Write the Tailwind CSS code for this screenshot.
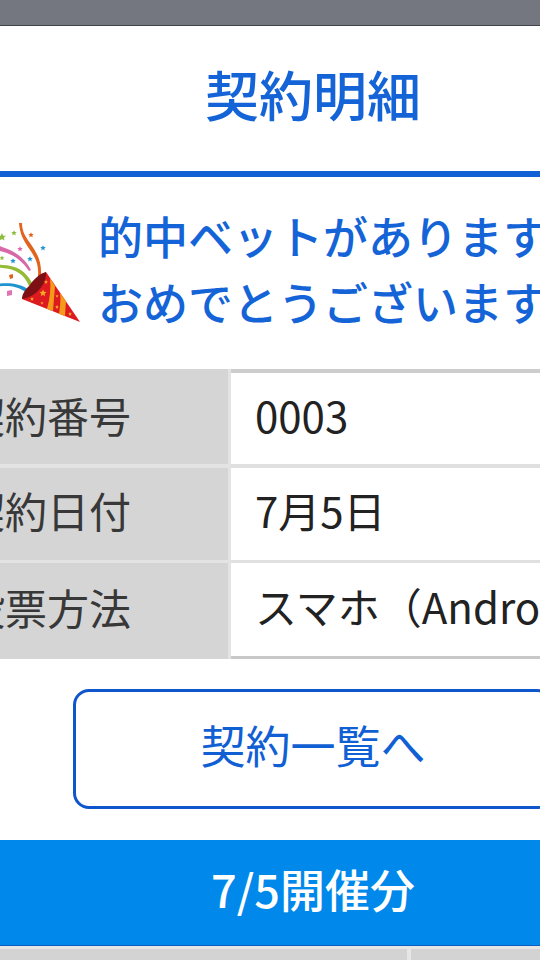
<!DOCTYPE html>
<html lang="ja">
<head>
    <meta charset="UTF-8">
    <meta name="viewport" content="width=device-width, initial-scale=1.0">
    <title>契約明細</title>

    <!-- Tailwind CSS -->
    <script src="https://cdn.jsdelivr.net/npm/@tailwindcss/browser@4"></script>
</head>
<body class="bg-white font-['Noto_Sans_CJK_JP',sans-serif] text-[#222] overflow-x-hidden">
    <!-- Page is wider than the window on both sides -->
    <div class="-ml-16 -mr-[150px]">
        <!-- Status bar -->
        <div class="h-[26px] bg-[#74777f] border-b border-[#3f444a]"></div>

        <!-- Title -->
        <header class="pt-7 pb-[37px] border-b-6 border-[#1260d6]">
            <h1 class="text-center text-[54px] leading-[80px] font-medium text-[#1464d8]">契約明細</h1>
        </header>

        <main>
            <!-- Winning message -->
            <section class="flex items-center gap-[18px] pl-6 pt-[26px] pb-[34px]">
                <svg class="w-[120px] h-[100px] shrink-0 mt-2" viewBox="-40 0 120 100" fill="none" aria-hidden="true">
                    <defs>
                        <path id="star" d="M0-4 1.2-1.3 4-1.2 1.8.7 2.5 3.5 0 1.9-2.5 3.5-1.8.7-4-1.2-1.2-1.3z"/>
                    </defs>
                    <!-- Streamers -->
                    <path d="M19 0h3c0 8 3 13 8 20 7 10 12 18 11 34l-3-1c1-14-4-20-10-29C22 15 20 10 19 0z" fill="#e0641e"/>
                    <path d="M-30 24c12-4 24-3 32 0 13 4 23 11 29 23l-2 1C21 36 12 31 0 28c-10-3-20-3-30-1z" fill="#d868a8"/>
                    <path d="M-30 44c12-3 22-3 32-2 14 0 24 6 30 18l-3 3C24 51 16 46 2 45c-10-1-20 0-32 3z" fill="#95bb36"/>
                    <path d="M-26 70C-14 60 14 56 28 66l-2 3C12 59-10 62-24 73z" fill="#1d93cf"/>
                    <!-- Cone -->
                    <path d="M46 49 80 99 22 76z" fill="#dc1a20"/>
                    <path d="M50 55l5 8-2 25-6-2c3-11 4-20 3-31zM60 70l6 8-1 15-6-2c1-7 2-14 1-21z" fill="#f59a1b"/>
                    <path d="M46 49c1 12-10 25-24 27 0-4 2-8 7-13 4-6 11-13 17-14z" fill="#7d1015"/>
                    <g fill="#f7a823">
                        <use href="#star" transform="translate(43 70) scale(.9)"/>
                        <use href="#star" transform="translate(32 76) scale(.5)"/>
                        <use href="#star" transform="translate(46 59) scale(.5)"/>
                        <use href="#star" transform="translate(57 73) scale(.4)"/>
                        <use href="#star" transform="translate(57 84) scale(.5)"/>
                        <use href="#star" transform="translate(70 91) scale(.5)"/>
                        <use href="#star" transform="translate(42 80) scale(.4)"/>
                    </g>
                    <!-- Confetti -->
                    <g fill="#8dbb3c">
                        <use href="#star" transform="translate(2 14)"/>
                        <use href="#star" transform="translate(14 10) scale(.7)"/>
                        <use href="#star" transform="translate(2 35) scale(.6)"/>
                    </g>
                    <g fill="#1d93cf">
                        <use href="#star" transform="translate(43 25) scale(.7)"/>
                        <use href="#star" transform="translate(30 36) scale(.7)"/>
                        <use href="#star" transform="translate(13 38) scale(.7)"/>
                    </g>
                    <use href="#star" transform="translate(20 26) scale(.7)" fill="#d868a8"/>
                    <use href="#star" transform="translate(31 12) scale(.7)" fill="#e0641e"/>
                    <path d="M9 52l4-1v4l-3 1z" fill="#e0641e"/>
                    <path d="M7 68l5-1v5l-5 1z" fill="#dd74b4"/>
                </svg>
                <p class="text-[45px] leading-[66px] font-medium text-[#1464d8] whitespace-nowrap">的中ベットがあります<br>おめでとうございます</p>
            </section>

            <!-- Contract details -->
            <table class="w-full table-fixed border-separate border-spacing-0 text-[42px] leading-[60px] text-left whitespace-nowrap">
                <tbody>
                    <tr class="h-[99px]">
                        <th scope="row" class="w-[295px] pl-[27px] pr-0 pb-1 font-normal text-[#383838] bg-[#d5d5d5] border-r-3 border-b-4 border-[#e3e3e3]">契約番号</th>
                        <td class="pl-6 pb-2 border-t-4 border-b-4 border-t-[#cdcdcd] border-b-[#e0e0e0]">0003</td>
                    </tr>
                    <tr class="h-[95px]">
                        <th scope="row" class="pl-[27px] pr-0 pb-2 font-normal text-[#383838] bg-[#d5d5d5] border-r-3 border-b-3 border-[#e3e3e3]">契約日付</th>
                        <td class="pl-6 pb-2 border-b-3 border-[#e0e0e0]">7月5日</td>
                    </tr>
                    <tr class="h-[96px]">
                        <th scope="row" class="pl-[27px] pr-0 pb-2 font-normal text-[#383838] bg-[#d5d5d5] border-r-3 border-[#e3e3e3]">投票方法</th>
                        <td class="pl-6 pb-2 border-b-3 border-[#c8c8c8]">スマホ（Andro</td>
                    </tr>
                </tbody>
            </table>

            <!-- Back to list -->
            <div class="px-[137px] pt-[30px] pb-[31px]">
                <button type="button" class="block w-full h-[120px] pb-2 rounded-2xl border-3 border-[#0f56cc] text-[45px] text-[#1060d4]">契約一覧へ</button>
            </div>

            <!-- Race day -->
            <h2 class="h-[106px] pt-[14px] text-center text-[45px] leading-[70px] font-medium text-white bg-[#0088ea] border-b border-[#0a5fc0]">7/5開催分</h2>
            <div class="flex h-[14px] gap-1 pt-[3px] bg-[#e6e6e6]">
                <div class="w-[471px] bg-[#d3d3d3]"></div>
                <div class="flex-1 bg-[#d3d3d3]"></div>
            </div>
        </main>
    </div>
</body>
</html>
